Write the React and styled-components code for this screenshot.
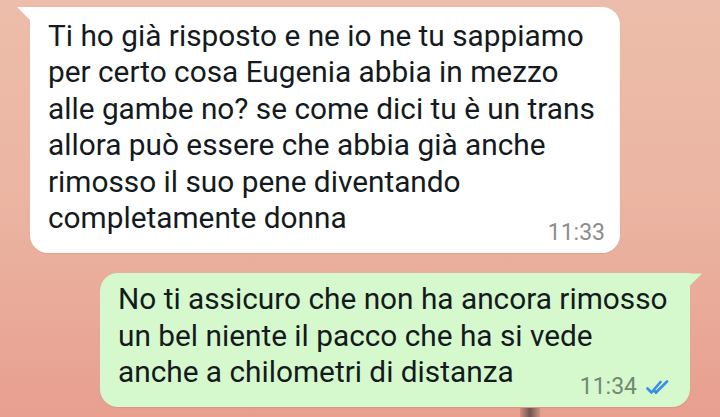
import styled, { createGlobalStyle } from 'styled-components'

const GlobalStyle = createGlobalStyle`
  html, body {
    margin: 0;
    padding: 0;
  }
  body {
    width: 720px;
    height: 417px;
    overflow: hidden;
    font-family: Roboto, "Noto Sans", "Liberation Sans", sans-serif;
    background: linear-gradient(180deg, #ecbdaa 0%, #ebb6a3 45%, #e9a797 80%, #e89f8f 100%);
  }
`

export default function App() {
  return (
    <>
      <GlobalStyle />
      <Chat>
        <Bubble>
          <Text>
            Ti ho già risposto e ne io ne tu sappiamo
            <br />
            per certo cosa Eugenia abbia in mezzo
            <br />
            alle gambe no? se come dici tu è un trans
            <br />
            allora può essere che abbia già anche
            <br />
            rimosso il suo pene diventando
            <br />
            completamente donna
          </Text>
          <Meta>
            <Time>11:33</Time>
          </Meta>
        </Bubble>
        <Bubble $out>
          <Text>
            No ti assicuro che non ha ancora rimosso
            <br />
            un bel niente il pacco che ha si vede
            <br />
            anche a chilometri di distanza
          </Text>
          <Meta $out>
            <Time $out>11:34</Time>
            <Ticks />
          </Meta>
        </Bubble>
        <Stick />
      </Chat>
    </>
  )
}

function Ticks() {
  return (
    <svg width="27" height="15" viewBox="0 0 27 15" fill="none">
      <path d="M1.5 8.5 L5.5 12.5 L14.5 2" stroke="#3a8de8" strokeWidth="2.6" strokeLinecap="round" strokeLinejoin="round" />
      <path d="M10 12.5 L21 1.5" stroke="#3a8de8" strokeWidth="2.6" strokeLinecap="round" />
      <path d="M8 10.5 L10 12.5" stroke="#3a8de8" strokeWidth="2.6" strokeLinecap="round" />
    </svg>
  )
}

const Chat = styled.div`
  position: relative;
  height: 417px;
  display: flex;
  flex-direction: column;
  gap: 20px;
  padding-top: 7px;
  box-sizing: border-box;
`

const Bubble = styled.div`
  position: relative;
  box-sizing: border-box;
  width: 590px;
  margin-left: ${(p) => (p.$out ? '100px' : '30px')};
  padding: ${(p) => (p.$out ? '8px 17px 8px 18px' : '11px 15px 8px 18px')};
  display: flex;
  flex-direction: column;
  background: ${(p) => (p.$out ? '#d5f9cd' : '#ffffff')};
  border-radius: ${(p) => (p.$out ? '18px 0 18px 18px' : '0 18px 18px 18px')};
  box-shadow: 0 1px 1px rgba(120, 60, 40, 0.1);

  &::before {
    content: '';
    position: absolute;
    top: 0;
    width: 13px;
    height: 13px;
    background: inherit;
    ${(p) =>
      p.$out
        ? `right: -12px; clip-path: polygon(0 0, 100% 0, 0 100%);`
        : `left: -13px; clip-path: polygon(0 0, 100% 0, 100% 100%);`}
  }
`

const Text = styled.div`
  font-size: 29.8px;
  line-height: 36.4px;
  color: #141a1d;
  white-space: nowrap;
`

const Meta = styled.div`
  align-self: flex-end;
  display: flex;
  align-items: center;
  gap: 9px;
  height: 24px;
  margin-top: ${(p) => (p.$out ? '-15.5px' : '-15px')};
`

const Time = styled.span`
  font-size: 23px;
  line-height: 24px;
  color: ${(p) => (p.$out ? '#71896f' : '#8d8d8d')};
`

const Stick = styled.div`
  position: absolute;
  left: 520px;
  bottom: 0;
  width: 20px;
  height: 9px;
  background: linear-gradient(90deg, rgba(110, 80, 75, 0.2), #6f5552 50%, rgba(110, 80, 75, 0.2));
`
